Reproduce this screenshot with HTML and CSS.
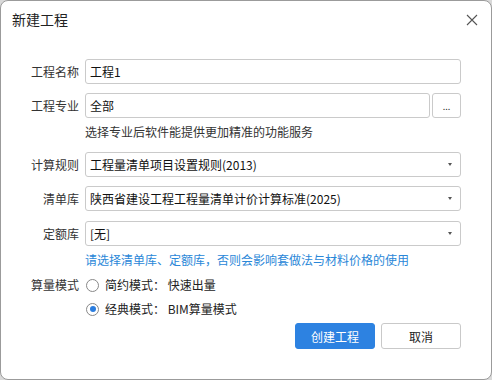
FILE: index.html
```html
<!DOCTYPE html>
<html lang="zh-CN">

<head>
  <meta charset="UTF-8" />
  <title>新建工程</title>
  <link rel="stylesheet" href="styles.css">
</head>

<body>

  <div class="dialog">
    <!-- Title bar -->
    <div class="titlebar">
      <span class="title">新建工程</span>
      <svg class="close" width="12" height="12" viewBox="0 0 12 12">
        <path d="M1 1L11 11M11 1L1 11" stroke="#555" stroke-width="1.1" fill="none" />
      </svg>
    </div>

    <!-- Form -->
    <div class="form">
      <div class="row r-name">
        <label>工程名称</label>
        <div class="field"><span>工程1</span></div>
      </div>

      <div class="row r-major">
        <label>工程专业</label>
        <div class="field-group">
          <div class="field"><span>全部</span></div>
          <div class="more">...</div>
        </div>
      </div>

      <div class="hint">选择专业后软件能提供更加精准的功能服务</div>

      <div class="row r-rule">
        <label>计算规则</label>
        <div class="field select"><span>工程量清单项目设置规则(2013)</span><i class="arrow"></i></div>
      </div>

      <div class="row r-list">
        <label>清单库</label>
        <div class="field select"><span>陕西省建设工程工程量清单计价计算标准(2025)</span><i class="arrow"></i></div>
      </div>

      <div class="row r-quota">
        <label>定额库</label>
        <div class="field select"><span>[无]</span><i class="arrow"></i></div>
      </div>

      <div class="hint blue">请选择清单库、定额库，否则会影响套做法与材料价格的使用</div>

      <div class="row r-mode1">
        <label>算量模式</label>
        <div class="radio"><i class="dot"></i><span>简约模式：&nbsp;快速出量</span></div>
      </div>

      <div class="row r-mode2">
        <label></label>
        <div class="radio"><i class="dot checked"></i><span>经典模式：&nbsp;BIM算量模式</span></div>
      </div>

      <div class="actions">
        <button class="btn primary">创建工程</button>
        <button class="btn">取消</button>
      </div>
    </div>
  </div>

</body>

</html>
```

FILE: styles.css
```css
html,
body {
  margin: 0;
  padding: 0;
  background: #d9d9d9;
}

body {
  font-family: "Microsoft YaHei", "Noto Sans CJK SC", sans-serif;
  font-size: 12px;
  color: #333;
}

.dialog {
  width: 492px;
  height: 380px;
  box-sizing: border-box;
  background: #fff;
  border: 1px solid #9b9b9b;
  border-radius: 8px;
  overflow: hidden;
}

.titlebar {
  height: 38px;
  display: flex;
  align-items: center;
  justify-content: space-between;
  padding: 0 13px 0 11px;
}

.title {
  font-size: 14px;
  color: #222;
  margin-top: -2px;
}

.close {
  margin-top: -1px;
}

.form {
  padding: 20px 30px 0 0;
  display: flex;
  flex-direction: column;
}

.row {
  display: grid;
  grid-template-columns: 78px 1fr;
  column-gap: 6px;
  align-items: center;
}

.row label {
  text-align: right;
  color: #333;
}

.field {
  height: 25px;
  box-sizing: border-box;
  border: 1px solid #cacaca;
  border-radius: 3px;
  padding: 0 4px;
  display: flex;
  align-items: center;
  color: #111;
  background: #fff;
}

.field-group {
  display: flex;
  gap: 2px;
}

.field-group .field {
  flex: 1;
}

.more {
  width: 29px;
  height: 25px;
  box-sizing: border-box;
  border: 1px solid #cacaca;
  border-radius: 3px;
  text-align: center;
  font-size: 9px;
  line-height: 26px;
  color: #333;
}

.select {
  justify-content: space-between;
  padding-right: 8px;
}

.arrow {
  width: 0;
  height: 0;
  border-left: 2.5px solid transparent;
  border-right: 2.5px solid transparent;
  border-top: 3px solid #555;
}

.r-major { margin-top: 9px; }
.r-rule { margin-top: 11px; }
.r-list { margin-top: 9px; }
.r-quota { margin-top: 10px; }

.hint {
  margin: 5px 0 0 84px;
  line-height: 18px;
  color: #333;
}

.hint.blue {
  color: #2a87d8;
}

.r-mode1 {
  margin-top: 6px;
  line-height: 20px;
}

.r-mode2 {
  margin-top: 4px;
  line-height: 20px;
}

.radio {
  display: flex;
  align-items: center;
  gap: 6px;
  color: #222;
}

.dot {
  width: 13px;
  height: 13px;
  box-sizing: border-box;
  border: 1px solid #888;
  border-radius: 50%;
  display: flex;
  align-items: center;
  justify-content: center;
  margin-left: 1px;
}

.dot.checked::after {
  content: '';
  width: 6px;
  height: 6px;
  border-radius: 50%;
  background: #2b7ddf;
}

.actions {
  margin-top: 4px;
  display: flex;
  justify-content: flex-end;
  gap: 6px;
}

.btn {
  width: 80px;
  height: 26px;
  box-sizing: border-box;
  border: 1px solid #c9c9c9;
  border-radius: 3px;
  background: #fff;
  font-family: inherit;
  font-size: 12px;
  color: #222;
  padding: 0;
}

.btn.primary {
  background: #2d82e1;
  border-color: #2d82e1;
  color: #fff;
}
```
